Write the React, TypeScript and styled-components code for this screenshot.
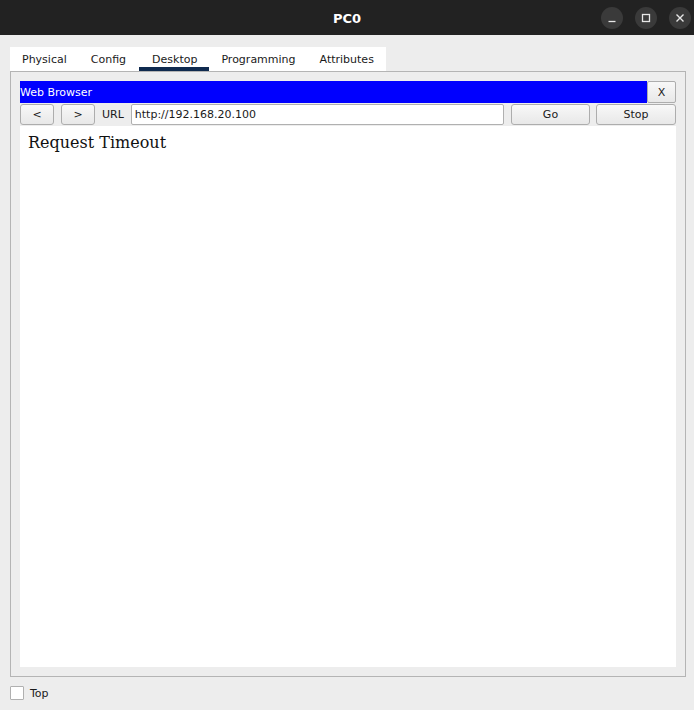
import React from "react";
import styled, { createGlobalStyle } from "styled-components";

const Global = createGlobalStyle`
  html, body { margin: 0; padding: 0; background: #ededed; }
  body { font-family: "DejaVu Sans", "Liberation Sans", sans-serif; font-size: 11px; color: #1a1a1a; }
  * { box-sizing: border-box; }
`;

const Window = styled.div`
  width: 694px;
  height: 710px;
  display: flex;
  flex-direction: column;
  background: #ededed;
  overflow: hidden;
`;

const TitleBar = styled.div`
  height: 35px;
  flex: none;
  background: #222222;
  display: grid;
  grid-template-columns: 1fr auto 1fr;
  align-items: center;
`;

const Title = styled.div`
  grid-column: 2;
  color: #ffffff;
  font-weight: bold;
  font-size: 13px;
  padding-top: 1px;
`;

const WinButtons = styled.div`
  grid-column: 3;
  justify-self: end;
  display: flex;
  gap: 12px;
  padding-right: 3px;
  padding-top: 1px;
`;

const WinButton = styled.div`
  width: 22px;
  height: 22px;
  border-radius: 50%;
  background: #3a3a3a;
  display: flex;
  align-items: center;
  justify-content: center;
`;

const Main = styled.div`
  flex: 1;
  display: flex;
  flex-direction: column;
  padding: 12px 8px 0 10px;
`;

const TabStrip = styled.div`
  align-self: flex-start;
  display: flex;
  background: #ffffff;
  height: 24px;
`;

const Tab = styled.div<{ $active?: boolean }>`
  padding: 5px 12px 1px;
  display: flex;
  align-items: center;
  color: #1a1a1a;
  border-bottom: 4px solid ${(p) => (p.$active ? "#0f2a4f" : "transparent")};
  ${(p) => (p.$active ? "padding-left:13px;padding-right:12px;margin-left:1px;" : "")}
`;

const Panel = styled.div`
  height: 606px;
  border: 1px solid #b4b4b4;
  padding: 9px;
  display: flex;
  flex-direction: column;
`;

const HeaderBar = styled.div`
  display: flex;
  height: 22px;
`;

const HeaderTitle = styled.div`
  flex: 1;
  background: #0000ff;
  color: #ffffff;
  display: flex;
  align-items: center;
  padding-top: 1px;
`;

const Button = styled.button<{ $w: number }>`
  width: ${(p) => p.$w}px;
  height: 21px;
  border: 1px solid #adadad;
  border-radius: 3px;
  background: linear-gradient(#f8f8f8, #e8e8e8);
  font-family: "DejaVu Sans", "Liberation Sans", sans-serif;
  font-size: 11px;
  color: #1a1a1a;
  padding: 0;
  flex: none;
  display: flex;
  align-items: center;
  justify-content: center;
`;

const CloseButton = styled(Button)`
  height: 22px;
  border-radius: 2px;
`;

const Toolbar = styled.div`
  display: flex;
  align-items: center;
  gap: 7px;
  height: 22px;
`;

const UrlLabel = styled.span`
  flex: none;
  color: #1a1a1a;
`;

const UrlInput = styled.div`
  flex: 1;
  height: 21px;
  background: #ffffff;
  border: 1px solid #b0b0b0;
  border-radius: 2px;
  padding-left: 3px;
  display: flex;
  align-items: center;
`;

const ActionGroup = styled.div`
  display: flex;
  gap: 6px;
`;

const Page = styled.div`
  flex: 1;
  margin-top: 1px;
  background: #ffffff;
  padding: 7px 8px;
`;

const PageText = styled.div`
  font-family: "DejaVu Serif", "Liberation Serif", serif;
  font-size: 16px;
  color: #111111;
`;

const Footer = styled.div`
  display: flex;
  align-items: center;
  gap: 6px;
  margin-top: 9px;
`;

const Check = styled.div`
  width: 14px;
  height: 14px;
  border: 1px solid #b0b0b0;
  background: #ffffff;
  border-radius: 1px;
`;

export default function App() {
  return (
    <>
      <Global />
      <Window>
        <TitleBar>
          <Title>PC0</Title>
          <WinButtons>
            <WinButton>
              <svg width="10" height="10" viewBox="0 0 10 10">
                <line x1="1.5" y1="8.5" x2="8.5" y2="8.5" stroke="#e6e6e6" strokeWidth="1.3" />
              </svg>
            </WinButton>
            <WinButton>
              <svg width="10" height="10" viewBox="0 0 10 10">
                <rect x="1.5" y="1.5" width="7" height="7" fill="none" stroke="#e6e6e6" strokeWidth="1.3" />
              </svg>
            </WinButton>
            <WinButton>
              <svg width="10" height="10" viewBox="0 0 10 10">
                <path d="M1.5 1.5 L8.5 8.5 M8.5 1.5 L1.5 8.5" stroke="#e6e6e6" strokeWidth="1.4" />
              </svg>
            </WinButton>
          </WinButtons>
        </TitleBar>
        <Main>
          <TabStrip>
            <Tab>Physical</Tab>
            <Tab>Config</Tab>
            <Tab $active>Desktop</Tab>
            <Tab>Programming</Tab>
            <Tab>Attributes</Tab>
          </TabStrip>
          <Panel>
            <HeaderBar>
              <HeaderTitle>Web Browser</HeaderTitle>
              <CloseButton $w={29}>X</CloseButton>
            </HeaderBar>
            <Toolbar>
              <Button $w={34}>&lt;</Button>
              <Button $w={34}>&gt;</Button>
              <UrlLabel>URL</UrlLabel>
              <UrlInput>http://192.168.20.100</UrlInput>
              <ActionGroup>
                <Button $w={79}>Go</Button>
                <Button $w={80}>Stop</Button>
              </ActionGroup>
            </Toolbar>
            <Page>
              <PageText>Request Timeout</PageText>
            </Page>
          </Panel>
          <Footer>
            <Check />
            <span>Top</span>
          </Footer>
        </Main>
      </Window>
    </>
  );
}
